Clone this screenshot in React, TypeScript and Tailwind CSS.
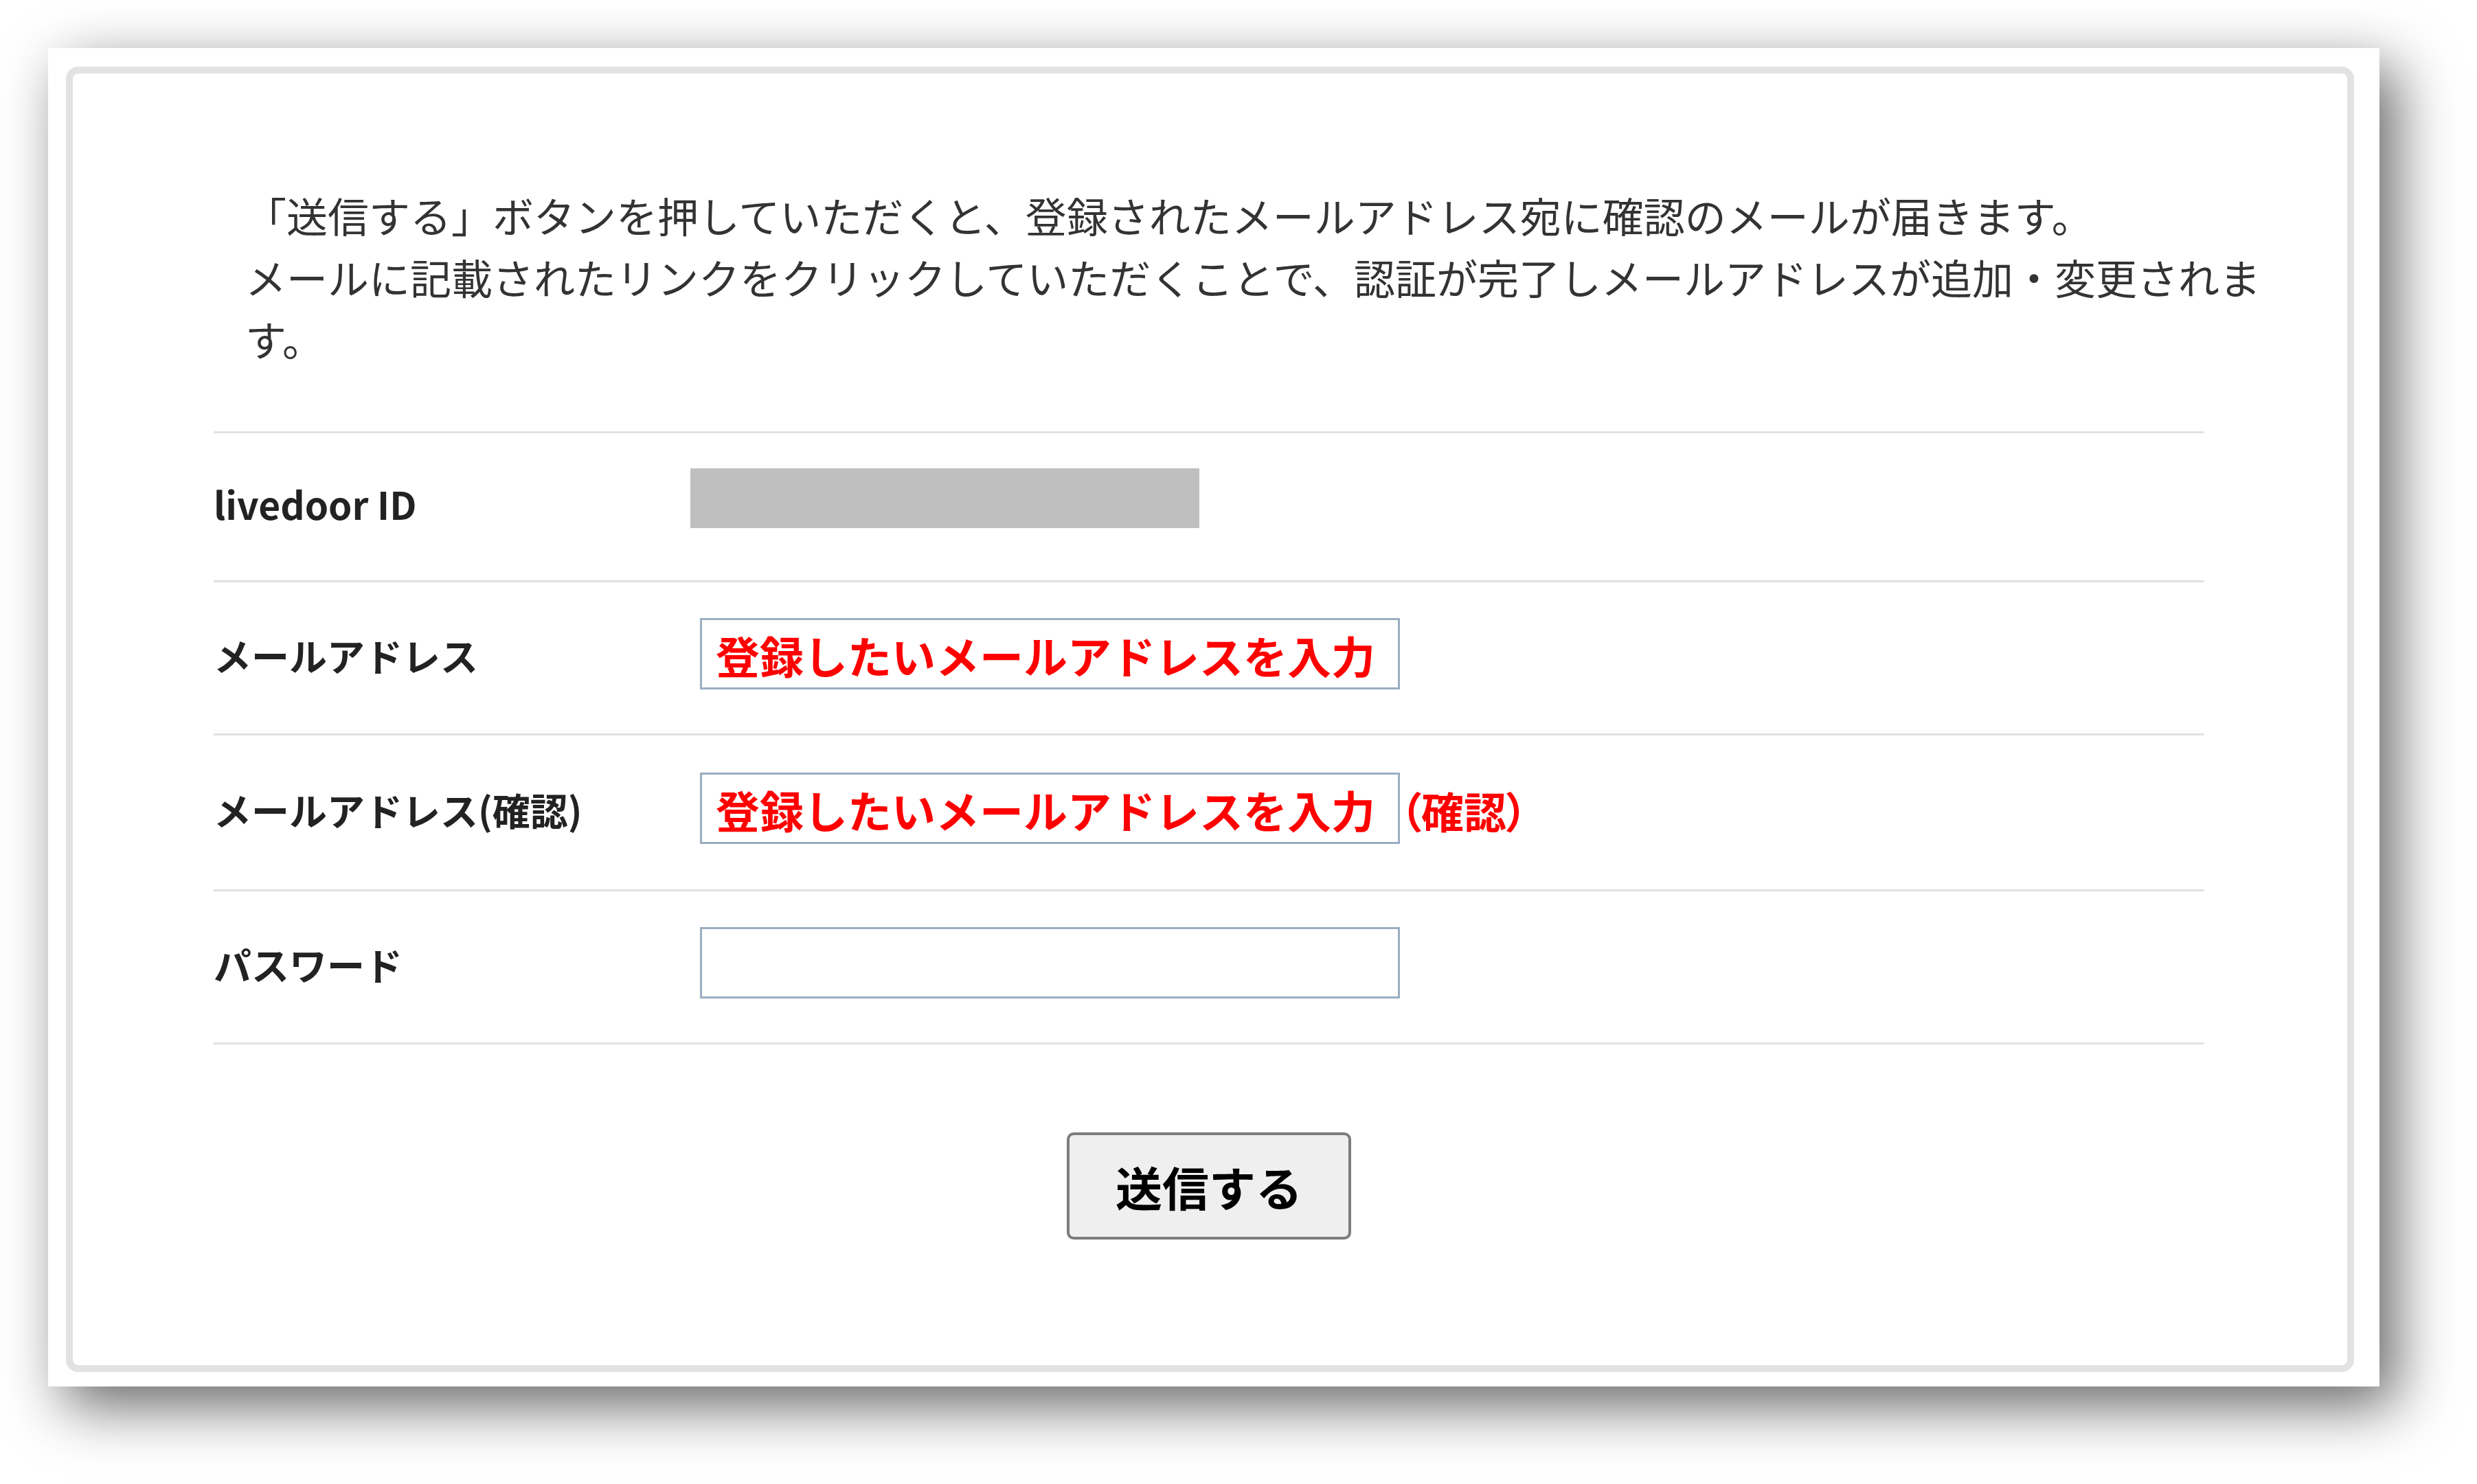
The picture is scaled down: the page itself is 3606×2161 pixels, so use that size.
const jp = "font-['Noto_Sans_CJK_JP','Noto_Sans',sans-serif]"

function Row({ label, children, h, first }: { label: string; children?: React.ReactNode; h: string; first?: boolean }) {
  return (
    <div className={`flex items-center border-b-[3px] border-[#e2e2e2] ${first ? 'border-t-[3px]' : ''} ${h}`}>
      <div className="w-[694px] shrink-0 mb-[10px] text-[55px] font-bold text-[#222] leading-none">{label}</div>
      <div className="flex items-center">{children}</div>
    </div>
  )
}

function RedText({ text }: { text: string }) {
  return <span className="text-[64px] font-bold text-[#ff0000] leading-none">{text}</span>
}

export default function App() {
  return (
    <div className={`min-h-[2161px] w-full bg-white pl-[70px] pt-[70px] ${jp}`}>
      <div className="flex w-[3394px] h-[1949px] bg-white pt-[27px] pl-[26px] pr-[37px] pb-[21px] shadow-[24px_28px_80px_rgba(0,0,0,0.6)]">
        <div className="flex-1 flex flex-col border-[10px] border-[#e2e2e2] rounded-[18px]">
          {/* intro text */}
          <p className="ml-[251px] mt-[161px] w-[2990px] text-[60px] leading-[90px] text-[#333] [text-spacing-trim:space-all]">
            「送信する」ボタンを押していただくと、登録されたメールアドレス宛に確認のメールが届きます。
            <br />
            メールに記載されたリンクをクリックしていただくことで、認証が完了しメールアドレスが追加・変更されます。
          </p>

          {/* form table */}
          <div className="ml-[205px] mt-[90px] w-[2898px] flex flex-col">
            <Row label="livedoor ID" h="h-[220px]" first>
              <div className="w-[741px] h-[87px] bg-[#bfbfbf] mb-[26px]"></div>
            </Row>
            <Row label="メールアドレス" h="h-[223px]">
              <div className="ml-[14px] mb-[12px] w-[1019px] h-[104px] border-[3px] border-[#9badc2] flex items-center pl-[20px] pt-[2px]">
                <RedText text="登録したいメールアドレスを入力" />
              </div>
            </Row>
            <Row label="メールアドレス(確認)" h="h-[227px]">
              <div className="ml-[14px] mb-[12px] w-[1019px] h-[104px] border-[3px] border-[#9badc2] flex items-center pl-[20px] pt-[2px]">
                <RedText text="登録したいメールアドレスを入力" />
              </div>
              <span className="mb-[6px] text-[62px] font-bold text-[#ff0000] leading-none [font-feature-settings:'palt']">（確認）</span>
            </Row>
            <Row label="パスワード" h="h-[223px]">
              <div className="ml-[14px] mb-[12px] w-[1019px] h-[104px] border-[3px] border-[#9badc2]"></div>
            </Row>

            <div className="flex justify-center mt-[128px]">
              <button className="w-[414px] h-[156px] bg-[#efefef] border-[4px] border-[#7c7c7c] rounded-[10px] text-[68px] font-bold text-black leading-none flex items-center justify-center pt-[2px]">
                送信する
              </button>
            </div>
          </div>
        </div>
      </div>
    </div>
  )
}
